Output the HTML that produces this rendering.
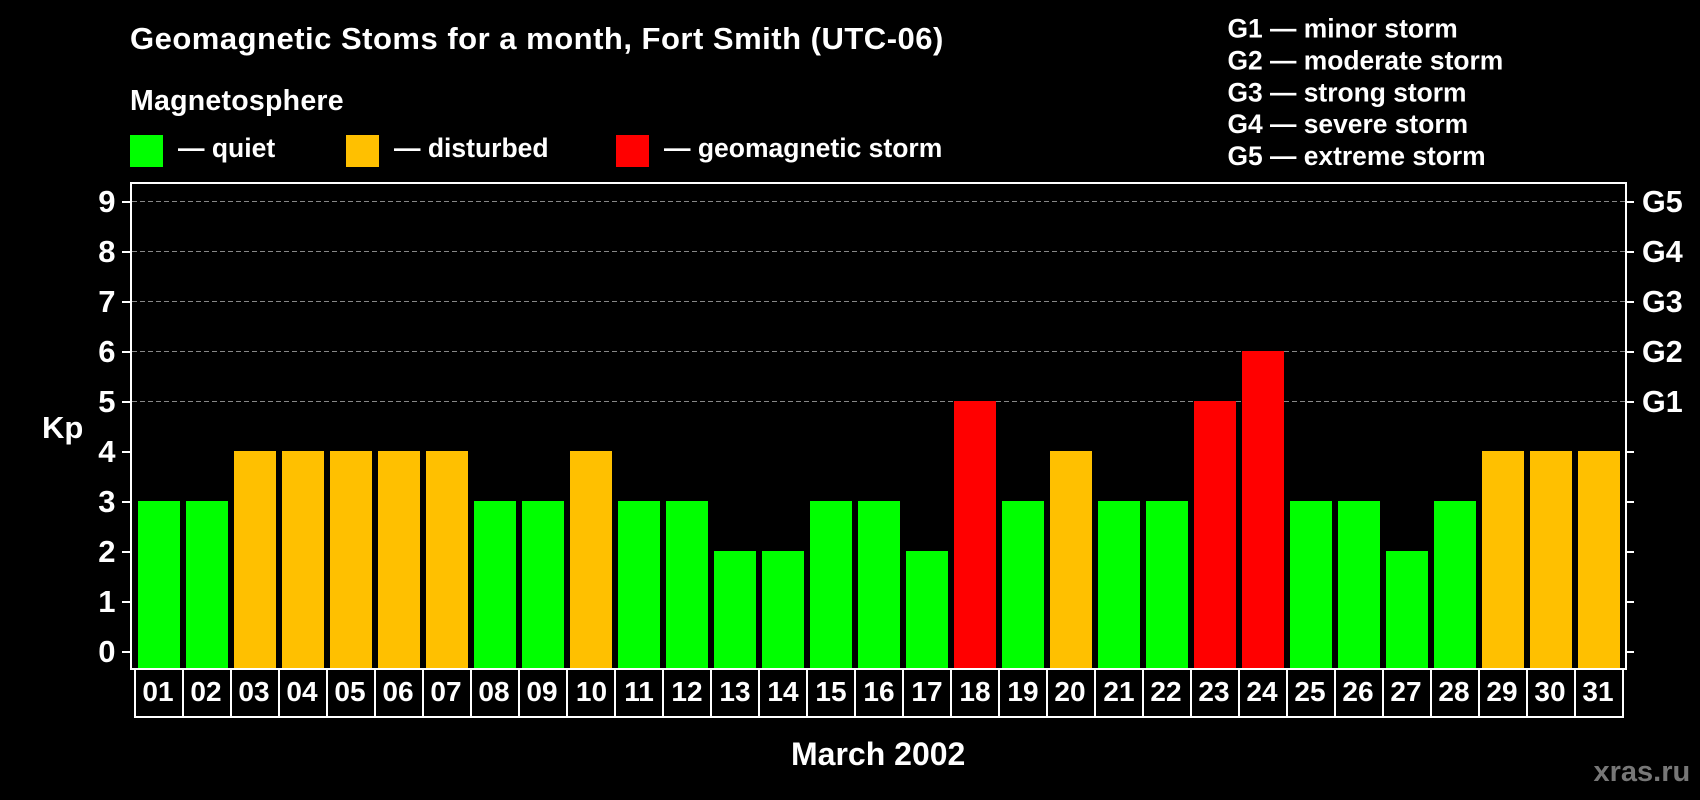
<!DOCTYPE html>
<html><head><meta charset="utf-8"><title>Geomagnetic Storms</title>
<style>
html,body{margin:0;padding:0;background:#000;width:1700px;height:800px;overflow:hidden}
svg{display:block}
text{font-family:"Liberation Sans",sans-serif;font-weight:bold;fill:#fff}
.y{font-size:31px;text-anchor:end}
.g{font-size:30.5px}
.d{font-size:28px;text-anchor:middle}
.l{font-size:26.5px}
.r{font-size:26.4px}
</style></head><body>
<svg width="1700" height="800" viewBox="0 0 1700 800" xmlns="http://www.w3.org/2000/svg">
<rect width="1700" height="800" fill="#000"/>
<text x="130" y="49" font-size="31" letter-spacing="0.5">Geomagnetic Stoms for a month, Fort Smith (UTC-06)</text>
<text x="130" y="110" font-size="28.5" letter-spacing="0.25">Magnetosphere</text>
<rect x="130" y="135" width="33" height="32" fill="#00ff00"/>
<text class="l" x="178" y="157">— quiet</text>
<rect x="346" y="135" width="33" height="32" fill="#ffc000"/>
<text class="l" x="394" y="157">— disturbed</text>
<rect x="616" y="135" width="33" height="32" fill="#ff0000"/>
<text class="l" x="664" y="157">— geomagnetic storm</text>
<text class="r" x="1227.5" y="37.5">G1 — minor storm</text>
<text class="r" x="1227.5" y="69.5">G2 — moderate storm</text>
<text class="r" x="1227.5" y="101.5">G3 — strong storm</text>
<text class="r" x="1227.5" y="133">G4 — severe storm</text>
<text class="r" x="1227.5" y="165">G5 — extreme storm</text>
<g stroke="#888" stroke-width="1" stroke-dasharray="5 3" shape-rendering="crispEdges">
<line x1="132" x2="1625" y1="201.5" y2="201.5"/>
<line x1="132" x2="1625" y1="251.5" y2="251.5"/>
<line x1="132" x2="1625" y1="301.5" y2="301.5"/>
<line x1="132" x2="1625" y1="351.5" y2="351.5"/>
<line x1="132" x2="1625" y1="401.5" y2="401.5"/>
</g>
<g shape-rendering="crispEdges">
<rect x="138" y="501" width="42" height="167" fill="#00ff00"/>
<rect x="186" y="501" width="42" height="167" fill="#00ff00"/>
<rect x="234" y="451" width="42" height="217" fill="#ffc000"/>
<rect x="282" y="451" width="42" height="217" fill="#ffc000"/>
<rect x="330" y="451" width="42" height="217" fill="#ffc000"/>
<rect x="378" y="451" width="42" height="217" fill="#ffc000"/>
<rect x="426" y="451" width="42" height="217" fill="#ffc000"/>
<rect x="474" y="501" width="42" height="167" fill="#00ff00"/>
<rect x="522" y="501" width="42" height="167" fill="#00ff00"/>
<rect x="570" y="451" width="42" height="217" fill="#ffc000"/>
<rect x="618" y="501" width="42" height="167" fill="#00ff00"/>
<rect x="666" y="501" width="42" height="167" fill="#00ff00"/>
<rect x="714" y="551" width="42" height="117" fill="#00ff00"/>
<rect x="762" y="551" width="42" height="117" fill="#00ff00"/>
<rect x="810" y="501" width="42" height="167" fill="#00ff00"/>
<rect x="858" y="501" width="42" height="167" fill="#00ff00"/>
<rect x="906" y="551" width="42" height="117" fill="#00ff00"/>
<rect x="954" y="401" width="42" height="267" fill="#ff0000"/>
<rect x="1002" y="501" width="42" height="167" fill="#00ff00"/>
<rect x="1050" y="451" width="42" height="217" fill="#ffc000"/>
<rect x="1098" y="501" width="42" height="167" fill="#00ff00"/>
<rect x="1146" y="501" width="42" height="167" fill="#00ff00"/>
<rect x="1194" y="401" width="42" height="267" fill="#ff0000"/>
<rect x="1242" y="351" width="42" height="317" fill="#ff0000"/>
<rect x="1290" y="501" width="42" height="167" fill="#00ff00"/>
<rect x="1338" y="501" width="42" height="167" fill="#00ff00"/>
<rect x="1386" y="551" width="42" height="117" fill="#00ff00"/>
<rect x="1434" y="501" width="42" height="167" fill="#00ff00"/>
<rect x="1482" y="451" width="42" height="217" fill="#ffc000"/>
<rect x="1530" y="451" width="42" height="217" fill="#ffc000"/>
<rect x="1578" y="451" width="42" height="217" fill="#ffc000"/>
</g>
<g fill="#fff" shape-rendering="crispEdges">
<rect x="130" y="182" width="1497" height="2"/>
<rect x="130" y="182" width="2" height="488"/>
<rect x="1625" y="182" width="2" height="488"/>
<rect x="130" y="668" width="1497" height="2"/>
<rect x="134" y="716" width="1490" height="2"/>
<rect x="122" y="201" width="8" height="2"/><rect x="1627" y="201" width="7" height="2"/>
<rect x="122" y="251" width="8" height="2"/><rect x="1627" y="251" width="7" height="2"/>
<rect x="122" y="301" width="8" height="2"/><rect x="1627" y="301" width="7" height="2"/>
<rect x="122" y="351" width="8" height="2"/><rect x="1627" y="351" width="7" height="2"/>
<rect x="122" y="401" width="8" height="2"/><rect x="1627" y="401" width="7" height="2"/>
<rect x="122" y="451" width="8" height="2"/><rect x="1627" y="451" width="7" height="2"/>
<rect x="122" y="501" width="8" height="2"/><rect x="1627" y="501" width="7" height="2"/>
<rect x="122" y="551" width="8" height="2"/><rect x="1627" y="551" width="7" height="2"/>
<rect x="122" y="601" width="8" height="2"/><rect x="1627" y="601" width="7" height="2"/>
<rect x="122" y="651" width="8" height="2"/><rect x="1627" y="651" width="7" height="2"/>
<rect x="134" y="670" width="2" height="46"/><rect x="182" y="670" width="2" height="46"/><rect x="230" y="670" width="2" height="46"/><rect x="278" y="670" width="2" height="46"/><rect x="326" y="670" width="2" height="46"/><rect x="374" y="670" width="2" height="46"/><rect x="422" y="670" width="2" height="46"/><rect x="470" y="670" width="2" height="46"/><rect x="518" y="670" width="2" height="46"/><rect x="566" y="670" width="2" height="46"/><rect x="614" y="670" width="2" height="46"/><rect x="662" y="670" width="2" height="46"/><rect x="710" y="670" width="2" height="46"/><rect x="758" y="670" width="2" height="46"/><rect x="806" y="670" width="2" height="46"/><rect x="854" y="670" width="2" height="46"/><rect x="902" y="670" width="2" height="46"/><rect x="950" y="670" width="2" height="46"/><rect x="998" y="670" width="2" height="46"/><rect x="1046" y="670" width="2" height="46"/><rect x="1094" y="670" width="2" height="46"/><rect x="1142" y="670" width="2" height="46"/><rect x="1190" y="670" width="2" height="46"/><rect x="1238" y="670" width="2" height="46"/><rect x="1286" y="670" width="2" height="46"/><rect x="1334" y="670" width="2" height="46"/><rect x="1382" y="670" width="2" height="46"/><rect x="1430" y="670" width="2" height="46"/><rect x="1478" y="670" width="2" height="46"/><rect x="1526" y="670" width="2" height="46"/><rect x="1574" y="670" width="2" height="46"/><rect x="1622" y="670" width="2" height="46"/>
</g>
<text class="y" x="115.5" y="212">9</text>
<text class="y" x="115.5" y="262">8</text>
<text class="y" x="115.5" y="312">7</text>
<text class="y" x="115.5" y="362">6</text>
<text class="y" x="115.5" y="412">5</text>
<text class="y" x="115.5" y="462">4</text>
<text class="y" x="115.5" y="512">3</text>
<text class="y" x="115.5" y="562">2</text>
<text class="y" x="115.5" y="612">1</text>
<text class="y" x="115.5" y="662">0</text>
<text class="g" x="1642" y="212">G5</text>
<text class="g" x="1642" y="262">G4</text>
<text class="g" x="1642" y="312">G3</text>
<text class="g" x="1642" y="362">G2</text>
<text class="g" x="1642" y="412">G1</text>
<text x="42" y="438" font-size="31">Kp</text>
<text class="d" x="158" y="701">01</text><text class="d" x="206" y="701">02</text><text class="d" x="254" y="701">03</text><text class="d" x="302" y="701">04</text><text class="d" x="350" y="701">05</text><text class="d" x="398" y="701">06</text><text class="d" x="446" y="701">07</text><text class="d" x="494" y="701">08</text><text class="d" x="542" y="701">09</text><text class="d" x="591.5" y="701">10</text><text class="d" x="639" y="701">11</text><text class="d" x="687" y="701">12</text><text class="d" x="735" y="701">13</text><text class="d" x="783" y="701">14</text><text class="d" x="831" y="701">15</text><text class="d" x="879" y="701">16</text><text class="d" x="927" y="701">17</text><text class="d" x="975" y="701">18</text><text class="d" x="1023" y="701">19</text><text class="d" x="1070" y="701">20</text><text class="d" x="1119" y="701">21</text><text class="d" x="1166" y="701">22</text><text class="d" x="1214" y="701">23</text><text class="d" x="1262" y="701">24</text><text class="d" x="1310" y="701">25</text><text class="d" x="1358" y="701">26</text><text class="d" x="1406" y="701">27</text><text class="d" x="1454" y="701">28</text><text class="d" x="1502" y="701">29</text><text class="d" x="1550" y="701">30</text><text class="d" x="1598" y="701">31</text>
<text x="791" y="765" font-size="32">March 2002</text>
<text x="1593.5" y="781" font-size="29" style="fill:#777">xras.ru</text>
</svg>
</body></html>
